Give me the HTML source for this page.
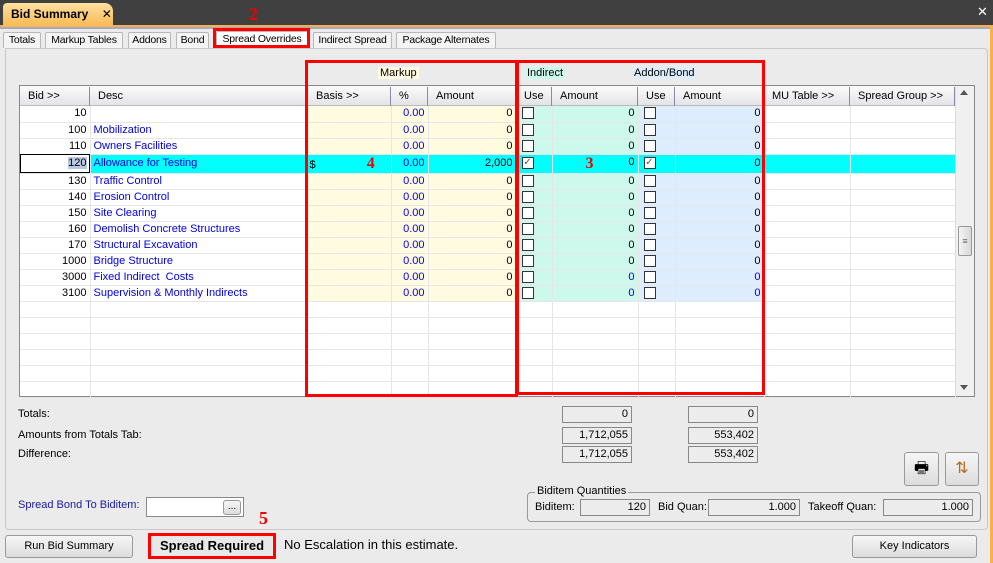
<!DOCTYPE html><html><head><style>
*{margin:0;padding:0;box-sizing:border-box}
body{width:993px;height:563px;overflow:hidden;background:#ebebeb;font-family:"Liberation Sans",sans-serif;font-size:11px;position:relative;color:#000}
.a{position:absolute}
.tab{position:absolute;top:32px;height:16px;border:1px solid #b8b8b8;border-bottom:none;background:#f4f4f4;font-size:10.5px;line-height:14px;text-align:center;white-space:nowrap;letter-spacing:-0.2px;border-radius:2px 2px 0 0}
table{border-collapse:collapse;table-layout:fixed;position:absolute;left:20px;top:106px}
td{height:16px;border-right:1px solid #e6e6e6;border-bottom:1px solid #e6e6e6;padding:0 3px;white-space:nowrap;overflow:hidden;font-size:11px;line-height:15px}
td.r{text-align:right}
.y{background:#fffbe0}.g{background:#cdf9ec}.b{background:#deedfd}
tr.s td{background:#00ffff}
.d{color:#0000e0}
.cb{display:inline-block;width:12px;height:12px;border:1px solid #333;background:#fff;vertical-align:middle;margin-left:2px}
.hd{position:absolute;top:87px;height:19px;line-height:18px;font-size:11px;border-right:1px solid #8a8aa8;padding-left:8px}
.box{position:absolute;height:17px;border:1px solid #888;background:#ececec;text-align:right;padding-right:3px;line-height:15px}
.btn{position:absolute;border:1px solid #999;border-radius:3px;background:linear-gradient(#f6f6f6,#dcdcdc);text-align:center;font-size:11px}
.red{position:absolute;border:3px solid #f00}
</style></head><body>
<div class="a" style="left:0;top:0;width:993px;height:26px;background:#404040"></div>
<div class="a" style="left:0;top:25px;width:993px;height:2px;background:#f7b04c"></div>
<div class="a" style="left:3px;top:3px;width:110px;height:24px;background:linear-gradient(#fde0a0,#f9b850);border-radius:4px 8px 0 0;font-weight:bold;font-size:12px;line-height:22px;padding-left:8px">Bid Summary <span style="margin-left:10px;font-weight:normal">✕</span></div>
<div class="a" style="left:977px;top:4px;color:#fff;font-size:13px">✕</div>
<div class="a" style="left:249px;top:4px;color:#e00;font:bold 18px 'Liberation Serif',serif">2</div>
<div class="a" style="left:990px;top:27px;width:3px;height:536px;background:#f7b04c"></div>
<div class="a" style="left:0;top:27px;width:990px;height:2px;background:#a8a8c0"></div>
<div class="tab" style="left:3px;width:38px">Totals</div>
<div class="tab" style="left:45px;width:78px">Markup Tables</div>
<div class="tab" style="left:128px;width:43px">Addons</div>
<div class="tab" style="left:176px;width:33px">Bond</div>
<div class="tab" style="left:216px;width:92px;top:31px;background:#fff">Spread Overrides</div>
<div class="tab" style="left:313px;width:79px">Indirect Spread</div>
<div class="tab" style="left:396px;width:100px">Package Alternates</div>
<div class="red" style="left:213px;top:28px;width:97px;height:20px"></div>
<div class="a" style="left:5px;top:48px;width:983px;height:482px;border:1px solid #c8c8c8;border-radius:0 4px 4px 4px;background:#ebebeb"></div>
<div class="a" style="left:378px;top:67px;background:#fffbe0;padding:0 2px">Markup</div>
<div class="a" style="left:525px;top:67px;background:#cdf9ec;padding:0 2px">Indirect</div>
<div class="a" style="left:633px;top:67px;background:#deedfd;padding:0 1px">Addon/Bond</div>
<div class="a" style="left:19px;top:85px;width:956px;height:312px;border:1px solid #888;background:#fff"></div>
<div class="a" style="left:20px;top:86px;width:935px;height:20px;background:linear-gradient(#fbfbfb,#e4e4e8);border-bottom:1px solid #bbb"></div>
<div class="hd" style="left:20px;width:70px">Bid &gt;&gt;</div>
<div class="hd" style="left:90px;width:216px">Desc</div>
<div class="hd" style="left:306px;width:85px;padding-left:10px">Basis &gt;&gt;</div>
<div class="hd" style="left:391px;width:37px">%</div>
<div class="hd" style="left:428px;width:88px">Amount</div>
<div class="hd" style="left:516px;width:36px">Use</div>
<div class="hd" style="left:552px;width:86px">Amount</div>
<div class="hd" style="left:638px;width:37px">Use</div>
<div class="hd" style="left:675px;width:89px">Amount</div>
<div class="hd" style="left:764px;width:86px">MU Table &gt;&gt;</div>
<div class="hd" style="left:850px;width:105px">Spread Group &gt;&gt;</div>
<table>
<colgroup><col style="width:70px"><col style="width:216px"><col style="width:85px"><col style="width:37px"><col style="width:88px"><col style="width:36px"><col style="width:86px"><col style="width:37px"><col style="width:89px"><col style="width:86px"><col style="width:105px"></colgroup>
<tr><td class="r">10</td><td class="d"></td><td class="y"></td><td class="y r d">0.00</td><td class="y r">0</td><td class="g"><span class="cb"></span></td><td class="g r">0</td><td class="b"><span class="cb"></span></td><td class="b r">0</td><td></td><td></td></tr>
<tr><td class="r">100</td><td class="d">Mobilization</td><td class="y"></td><td class="y r d">0.00</td><td class="y r">0</td><td class="g"><span class="cb"></span></td><td class="g r">0</td><td class="b"><span class="cb"></span></td><td class="b r">0</td><td></td><td></td></tr>
<tr><td class="r">110</td><td class="d">Owners Facilities</td><td class="y"></td><td class="y r d">0.00</td><td class="y r">0</td><td class="g"><span class="cb"></span></td><td class="g r">0</td><td class="b"><span class="cb"></span></td><td class="b r">0</td><td></td><td></td></tr>
<tr class="s"><td class="r" style="background:#fff;outline:1px solid #000;outline-offset:-1px"><span style="background:#b8c8e0">120</span></td><td class="d">Allowance for Testing</td><td>$ <span style="margin-left:48px;color:#e00;font:bold 16px 'Liberation Serif',serif">4</span></td><td class="r d">0.00</td><td class="r">2,000</td><td><span class="cb" style="font-size:10px;line-height:10px;text-align:center;color:#555">✓</span></td><td class="r"><span style="float:left;margin-left:30px;color:#e00;font:bold 16px 'Liberation Serif',serif">3</span>0</td><td><span class="cb" style="font-size:10px;line-height:10px;text-align:center;color:#555">✓</span></td><td class="r">0</td><td></td><td></td></tr>
<tr><td class="r">130</td><td class="d">Traffic Control</td><td class="y"></td><td class="y r d">0.00</td><td class="y r">0</td><td class="g"><span class="cb"></span></td><td class="g r">0</td><td class="b"><span class="cb"></span></td><td class="b r">0</td><td></td><td></td></tr>
<tr><td class="r">140</td><td class="d">Erosion Control</td><td class="y"></td><td class="y r d">0.00</td><td class="y r">0</td><td class="g"><span class="cb"></span></td><td class="g r">0</td><td class="b"><span class="cb"></span></td><td class="b r">0</td><td></td><td></td></tr>
<tr><td class="r">150</td><td class="d">Site Clearing</td><td class="y"></td><td class="y r d">0.00</td><td class="y r">0</td><td class="g"><span class="cb"></span></td><td class="g r">0</td><td class="b"><span class="cb"></span></td><td class="b r">0</td><td></td><td></td></tr>
<tr><td class="r">160</td><td class="d">Demolish Concrete Structures</td><td class="y"></td><td class="y r d">0.00</td><td class="y r">0</td><td class="g"><span class="cb"></span></td><td class="g r">0</td><td class="b"><span class="cb"></span></td><td class="b r">0</td><td></td><td></td></tr>
<tr><td class="r">170</td><td class="d">Structural Excavation</td><td class="y"></td><td class="y r d">0.00</td><td class="y r">0</td><td class="g"><span class="cb"></span></td><td class="g r">0</td><td class="b"><span class="cb"></span></td><td class="b r">0</td><td></td><td></td></tr>
<tr><td class="r">1000</td><td class="d">Bridge Structure</td><td class="y"></td><td class="y r d">0.00</td><td class="y r">0</td><td class="g"><span class="cb"></span></td><td class="g r">0</td><td class="b"><span class="cb"></span></td><td class="b r">0</td><td></td><td></td></tr>
<tr><td class="r">3000</td><td class="d">Fixed Indirect&nbsp; Costs</td><td class="y"></td><td class="y r d">0.00</td><td class="y r">0</td><td class="g"><span class="cb"></span></td><td class="g r d">0</td><td class="b"><span class="cb"></span></td><td class="b r d">0</td><td></td><td></td></tr>
<tr><td class="r">3100</td><td class="d">Supervision &amp; Monthly Indirects</td><td class="y"></td><td class="y r d">0.00</td><td class="y r">0</td><td class="g"><span class="cb"></span></td><td class="g r d">0</td><td class="b"><span class="cb"></span></td><td class="b r d">0</td><td></td><td></td></tr>
<tr><td></td><td></td><td></td><td></td><td></td><td></td><td></td><td></td><td></td><td></td><td></td></tr>
<tr><td></td><td></td><td></td><td></td><td></td><td></td><td></td><td></td><td></td><td></td><td></td></tr>
<tr><td></td><td></td><td></td><td></td><td></td><td></td><td></td><td></td><td></td><td></td><td></td></tr>
<tr><td></td><td></td><td></td><td></td><td></td><td></td><td></td><td></td><td></td><td></td><td></td></tr>
<tr><td></td><td></td><td></td><td></td><td></td><td></td><td></td><td></td><td></td><td></td><td></td></tr>
<tr><td style="height:13px"></td><td></td><td></td><td></td><td></td><td></td><td></td><td></td><td></td><td></td><td></td></tr>
</table>
<div class="a" style="left:955px;top:86px;width:19px;height:310px;background:#f0f0f0;border-left:1px solid #ddd"></div>
<div class="a" style="left:960px;top:90px;width:0;height:0;border:4px solid transparent;border-bottom:5px solid #555;border-top:none"></div>
<div class="a" style="left:960px;top:385px;width:0;height:0;border:4px solid transparent;border-top:5px solid #555;border-bottom:none"></div>
<div class="a" style="left:958px;top:226px;width:14px;height:30px;border:1px solid #999;border-radius:2px;background:linear-gradient(90deg,#f4f4f4,#d8d8d8);text-align:center;line-height:28px;font-size:9px;color:#666">≡</div>
<div class="red" style="left:305px;top:60px;width:213px;height:337px"></div>
<div class="red" style="left:516px;top:60px;width:249px;height:335px"></div>
<div class="a" style="left:18px;top:408px">Totals:</div>
<div class="a" style="left:18px;top:429px">Amounts from Totals Tab:</div>
<div class="a" style="left:18px;top:448px">Difference:</div>
<div class="box" style="left:562px;top:406px;width:70px">0</div>
<div class="box" style="left:688px;top:406px;width:70px">0</div>
<div class="box" style="left:562px;top:427px;width:70px">1,712,055</div>
<div class="box" style="left:688px;top:427px;width:70px">553,402</div>
<div class="box" style="left:562px;top:446px;width:70px">1,712,055</div>
<div class="box" style="left:688px;top:446px;width:70px">553,402</div>
<div class="btn" style="left:904px;top:452px;width:35px;height:34px;font-size:16px;line-height:32px">🖶</div>
<div class="btn" style="left:945px;top:452px;width:34px;height:34px;font-size:16px;line-height:32px;color:#b86a20">⇅</div>
<div class="a" style="left:527px;top:492px;width:454px;height:30px;border:1px solid #999;border-radius:4px"></div>
<div class="a" style="left:535px;top:485px;background:#ebebeb;padding:0 2px">Biditem Quantities</div>
<div class="a" style="left:535px;top:501px">Biditem:</div>
<div class="box" style="left:580px;top:499px;width:70px">120</div>
<div class="a" style="left:658px;top:501px">Bid Quan:</div>
<div class="box" style="left:708px;top:499px;width:92px">1.000</div>
<div class="a" style="left:808px;top:501px">Takeoff Quan:</div>
<div class="box" style="left:883px;top:499px;width:90px">1.000</div>
<div class="a" style="left:18px;top:499px;color:#1a1aa0">Spread Bond To Biditem:</div>
<div class="a" style="left:146px;top:497px;width:98px;height:20px;border:1px solid #888;background:#fff"></div>
<div class="btn" style="left:223px;top:500px;width:18px;height:15px;line-height:11px;font-size:10px">...</div>
<div class="a" style="left:259px;top:508px;color:#e00;font:bold 18px 'Liberation Serif',serif">5</div>
<div class="btn" style="left:5px;top:535px;width:128px;height:23px;line-height:21px">Run Bid Summary</div>
<div class="a" style="left:148px;top:533px;width:128px;height:26px;border:3px solid #f00;background:#e8e8e8;font-weight:bold;font-size:13px;text-align:center;line-height:20px">Spread Required</div>
<div class="a" style="left:284px;top:537px;font-size:13px">No Escalation in this estimate.</div>
<div class="btn" style="left:852px;top:535px;width:125px;height:23px;line-height:21px">Key Indicators</div>
</body></html>
